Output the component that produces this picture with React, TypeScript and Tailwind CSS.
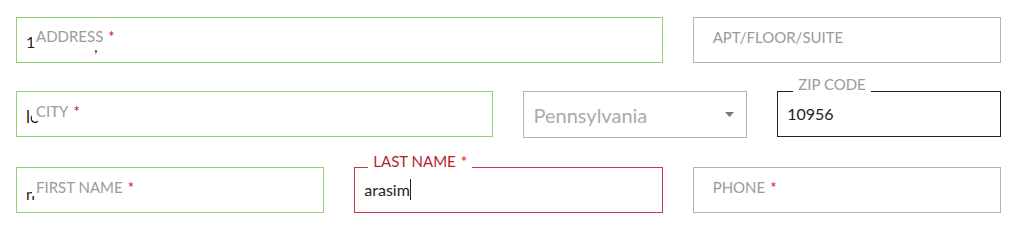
import React from "react";

const font = { fontFamily: "Lato, 'Liberation Sans', sans-serif" };

function Star() {
    return <span className="text-[#e2001a] ml-[5px]">*</span>;
}

// box with a label sitting inside it, over the partial value
function InsideField({ span, border, value, label, required, valueClass }: {
    span: string;
    border: string;
    value?: string;
    label: string;
    required?: boolean;
    valueClass?: string;
}) {
    return (
        <div className={`${span} relative h-[46px] border bg-white ${border}`}>
            {value && (
                <span className={`absolute left-[9px] text-[#222] text-[16px] ${valueClass ?? "top-[12px]"}`}>{value}</span>
            )}
            <span className="absolute left-[15px] top-[10px] bg-white pl-[4px] pr-[2px] text-[15px] leading-[18px] text-[#9b9b9b] uppercase">
                {label}
                {required && <Star />}
            </span>
        </div>
    );
}

export default function App() {
    return (
        <div className="w-[1024px] h-[232px] bg-white" style={font}>
            <div className="grid grid-cols-12 gap-x-[30px] gap-y-[28.5px] pt-[16.5px] pl-4 pr-[23px]">
                <div className="col-span-8 relative h-[46px] border border-[#94d070] bg-white">
                    <span className="absolute left-[9px] top-[12px] text-[16px] text-[#222]">1</span>
                    <span className="absolute left-[77px] top-[16px] text-[16px] text-[#222]">,</span>
                    <span className="absolute left-[15px] top-[10px] pl-[4px] pr-[2px] text-[15px] leading-[17px] text-[#9b9b9b] bg-white">
                        ADDRESS
                        <Star />
                    </span>
                </div>
                <InsideField span="col-span-4" border="border-[#b3b3b3]" label="APT/FLOOR/SUITE" />

                <InsideField span="col-span-6" border="border-[#94d070]" value="le" label="CITY" required valueClass="top-[12px] text-[17px]" />
                <div className="col-span-3 h-[47px] border border-[#b3b3b3] bg-white flex items-center justify-between pl-[9px] pr-[12px]">
                    <span className="text-[20px] text-[#ababab]">Pennsylvania</span>
                    <svg width="9" height="5" viewBox="0 0 9 5">
                        <path d="M0 0 L9 0 L4.5 5 Z" fill="#777" />
                    </svg>
                </div>
                <div className="col-span-3 relative h-[46px] border border-[#222] bg-white flex items-center pl-[9px]">
                    <span className="absolute left-[15px] -top-[17px] bg-white px-[5px] text-[15px] leading-[18px] text-[#9b9b9b]">ZIP CODE</span>
                    <span className="text-[16px] text-[#222]">10956</span>
                </div>

                <InsideField span="col-span-4" border="border-[#94d070]" value="n" label="FIRST NAME" required valueClass="top-[14px]" />
                <div className="col-span-4 relative h-[46px] border border-[#c23b44] bg-white flex items-center pl-[9px]">
                    <span className="absolute left-[13px] -top-[16px] bg-white px-[5px] text-[15px] leading-[18px] text-[#b3242f]">
                        LAST NAME
                        <Star />
                    </span>
                    <span className="text-[16px] text-[#222]">arasim</span>
                    <span className="w-px h-[21px] bg-[#222]" />
                </div>
                <InsideField span="col-span-4" border="border-[#b3b3b3]" label="PHONE" required />
            </div>
        </div>
    );
}
